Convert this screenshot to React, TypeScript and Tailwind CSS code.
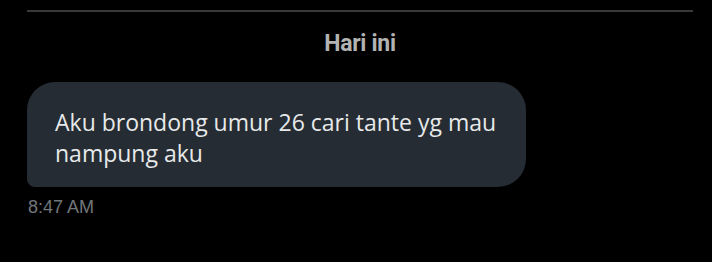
export default function App() {
  return (
    <main className="w-[712px] h-[262px] bg-black overflow-hidden">
      {/* DIVIDER */}
      <div className="pt-[10px] pl-[27px] pr-[19px]">
        <div className="h-[2px] bg-[#38393a]" />
      </div>
      {/* DAY LABEL */}
      <div className="flex justify-center pt-[18px] pl-[8px]">
        <span className="text-[23px] leading-[28px] font-bold tracking-[-0.3px] text-[#b3b3b3] font-['Roboto',sans-serif]">
          Hari ini
        </span>
      </div>
      {/* MESSAGE */}
      <div className="pt-[24px] px-[27px]">
        <div className="w-[499px] h-[105px] bg-[#252c33] rounded-[28px] rounded-bl-[8px] pl-[28px] pr-[20px] pt-[25px]">
          <p className="text-[23px] leading-[31px] text-[#e7e9ea] font-['Open_Sans',sans-serif]">
            Aku brondong umur 26 cari tante yg mau nampung aku
          </p>
        </div>
        <div className="pt-[10px] pl-px text-[18px] leading-[20px] text-[#71767b] font-['Liberation_Sans',Arial,sans-serif]">
          8:47 AM
        </div>
      </div>
    </main>
  );
}
